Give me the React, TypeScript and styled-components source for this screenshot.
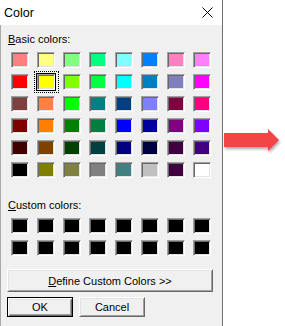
import React from "react";
import styled, { createGlobalStyle, css } from "styled-components";

const Global = createGlobalStyle`
  html, body { margin: 0; padding: 0; background: #ffffff; }
  body { font-family: "Liberation Sans", Arial, sans-serif; }
`;

const Page = styled.div`
  display: flex;
  align-items: stretch;
  width: 285px;
  height: 326px;
  overflow: hidden;
`;

const Dialog = styled.div`
  box-sizing: border-box;
  width: 223px;
  height: 326px;
  display: flex;
  flex-direction: column;
  border-right: 1px solid #6f6f6f;
`;

const TitleBar = styled.div`
  height: 25px;
  flex: none;
  background: #ffffff;
  display: flex;
  align-items: center;
  justify-content: space-between;
  padding-left: 4px;
  padding-right: 9px;
`;

const Title = styled.span`
  font-family: "Liberation Sans", Arial, sans-serif;
  font-size: 12.5px;
  color: #000;
`;

const Close = styled.svg`
  width: 11px;
  height: 11px;
  display: block;
`;

const Body = styled.div`
  flex: 1;
  background: #f0f0f0;
  border-left: 1px solid #a9a9a9;
  display: flex;
  flex-direction: column;
  align-items: flex-start;
  padding: 8px 0 0 6px;
`;

const Label = styled.div<{ $mt?: number }>`
  font-size: 11px;
  line-height: 13px;
  color: #000;
  margin-left: 1px;
  margin-top: ${(p) => p.$mt ?? 0}px;
`;

const Grid = styled.div`
  display: grid;
  grid-template-columns: repeat(8, 18px);
  grid-auto-rows: 16px;
  column-gap: 8px;
  row-gap: 6px;
  margin-left: 4px;
  margin-top: 6px;
`;

const Swatch = styled.span<{ $c: string; $sel?: boolean }>`
  position: relative;
  box-sizing: border-box;
  width: 18px;
  height: 16px;
  background: ${(p) => p.$c};
  border-top: 1px solid #a0a0a0;
  border-left: 1px solid #a0a0a0;
  border-right: 1px solid #ffffff;
  border-bottom: 1px solid #ffffff;
  box-shadow: inset 1px 1px #696969, inset -1px -1px #e3e3e3;
  ${(p) =>
    p.$sel &&
    css`
      outline: 1px solid #000;
      &::after {
        content: "";
        position: absolute;
        top: -4px;
        left: -4px;
        right: -5px;
        bottom: -4px;
        border: 1px dotted #000;
      }
    `}
`;

const WinButton = styled.button<{ $w: number; $h: number; $default?: boolean }>`
  box-sizing: border-box;
  width: ${(p) => p.$w}px;
  height: ${(p) => p.$h}px;
  padding: 0;
  margin: 0;
  background: #f0f0f0;
  font-family: "Liberation Sans", Arial, sans-serif;
  font-size: 11px;
  color: #000;
  display: flex;
  align-items: center;
  justify-content: center;
  ${(p) =>
    p.$default
      ? css`
          border: 1px solid #000;
          box-shadow: inset 1px 1px #ffffff, inset -1px -1px #696969,
            inset 2px 2px #e3e3e3, inset -2px -2px #a0a0a0;
        `
      : css`
          border-top: 1px solid #ffffff;
          border-left: 1px solid #ffffff;
          border-right: 1px solid #696969;
          border-bottom: 1px solid #696969;
          box-shadow: inset 1px 1px #e3e3e3, inset -1px -1px #a0a0a0;
        `}
`;

const DefineRow = styled.div`
  margin-top: 13px;
`;

const ButtonRow = styled.div`
  display: flex;
  gap: 6px;
  margin-top: 5px;
`;

const Side = styled.div`
  flex: 1;
  padding-top: 127px;
  padding-left: 1px;
`;

const Arrow = styled.svg`
  display: block;
  overflow: visible;
  filter: drop-shadow(1px 2px 1.5px rgba(0, 0, 0, 0.35));
`;

const basic = [
  ["#FF8080", "#FFFF80", "#80FF80", "#00FF80", "#80FFFF", "#0080FF", "#FF80C0", "#FF80FF"],
  ["#FF0000", "#FFFF00", "#80FF00", "#00FF40", "#00FFFF", "#0080C0", "#8080C0", "#FF00FF"],
  ["#804040", "#FF8040", "#00FF00", "#008080", "#004080", "#8080FF", "#800040", "#FF0080"],
  ["#800000", "#FF8000", "#008000", "#008040", "#0000FF", "#0000A0", "#800080", "#8000FF"],
  ["#400000", "#804000", "#004000", "#004040", "#000080", "#000040", "#400040", "#400080"],
  ["#000000", "#808000", "#808040", "#808080", "#408080", "#C0C0C0", "#400040", "#FFFFFF"],
];

export default function App() {
  return (
    <>
      <Global />
      <Page>
        <Dialog>
          <TitleBar>
            <Title>Color</Title>
            <Close viewBox="0 0 11 11">
              <path d="M0.5 0.5 L10.5 10.5 M10.5 0.5 L0.5 10.5" stroke="#000" strokeWidth="1" fill="none" />
            </Close>
          </TitleBar>
          <Body>
            <Label>
              <u>B</u>asic colors:
            </Label>
            <Grid>
              {basic.flatMap((row, r) =>
                row.map((c, i) => <Swatch key={`b${r}-${i}`} $c={c} $sel={r === 1 && i === 1} />)
              )}
            </Grid>
            <Label $mt={21}>
              <u>C</u>ustom colors:
            </Label>
            <Grid>
              {Array.from({ length: 16 }).map((_, i) => (
                <Swatch key={`c${i}`} $c="#000000" />
              ))}
            </Grid>
            <DefineRow>
              <WinButton $w={206} $h={23}>
                <span>
                  <u>D</u>efine Custom Colors &gt;&gt;
                </span>
              </WinButton>
            </DefineRow>
            <ButtonRow>
              <WinButton $w={66} $h={20} $default>
                OK
              </WinButton>
              <WinButton $w={66} $h={20}>
                Cancel
              </WinButton>
            </ButtonRow>
          </Body>
        </Dialog>
        <Side>
          <Arrow width="56" height="24" viewBox="0 0 56 24">
            <polygon points="0,6 44,6 44,2 55,13 44,24 44,20 0,20" fill="#f24646" />
          </Arrow>
        </Side>
      </Page>
    </>
  );
}
